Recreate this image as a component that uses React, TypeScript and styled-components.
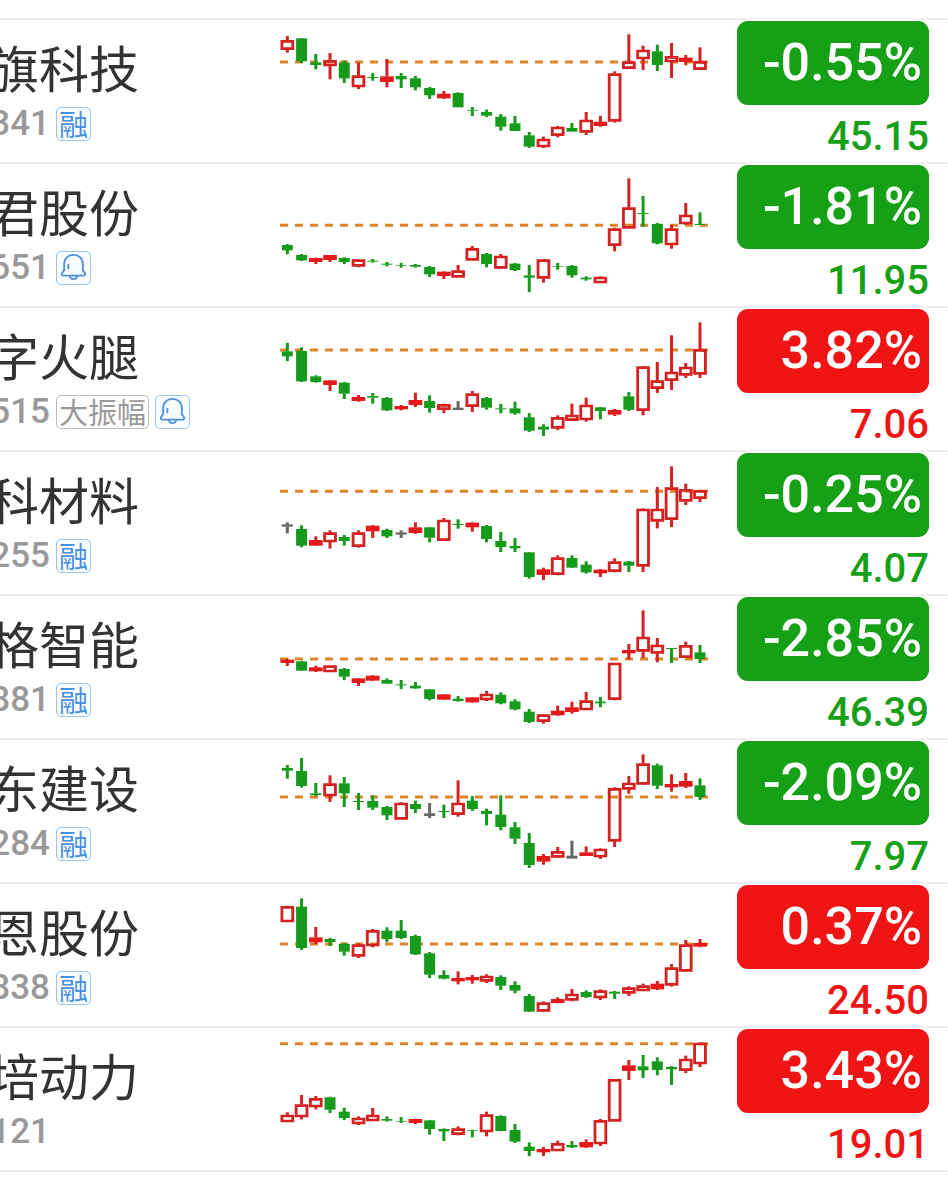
import React from 'react';
import styled, { createGlobalStyle } from 'styled-components';

const UP = '#f01414';
const DOWN = '#16a016';

const GlobalStyle = createGlobalStyle`
  *, *::before, *::after { box-sizing: border-box; }
  body {
    margin: 0;
    background: #fff;
    font-family: Roboto, "Noto Sans CJK SC", sans-serif;
  }
`;

const List = styled.ul`
  margin: 0;
  padding: 18px 0 10px;
  list-style: none;
`;

const Row = styled.li`
  display: grid;
  grid-template-columns: minmax(0, 1fr) 450px 192px;
  column-gap: 17px;
  height: 144px;
  padding-right: 19px;
  border-top: 2px solid #f0f0f0;

  &:last-child {
    height: 146px;
    border-bottom: 2px solid #f0f0f0;
  }
`;

const Stock = styled.div`
  display: flex;
  flex-direction: column;
`;

const Name = styled.div`
  display: flex;
  justify-content: flex-end;
  width: 139px;
  margin-top: 14px;
  color: #333;
  font-family: "Noto Sans CJK SC", sans-serif;
  font-size: 50px;
  line-height: 64px;
  white-space: nowrap;
`;

const Meta = styled.div`
  display: flex;
  align-items: center;
  gap: 6px;
  height: 34px;
  margin-top: 9px;
`;

const Code = styled.span`
  display: flex;
  flex: none;
  justify-content: flex-end;
  width: 50px;
  color: #999;
  font-size: 35px;
  font-weight: 500;
  line-height: 34px;
`;

const Tag = styled.span<{ $tone: 'blue' | 'gray' }>`
  display: flex;
  flex: none;
  align-items: center;
  justify-content: center;
  height: 34px;
  padding: 0 2px 3px;
  border: 1px solid ${(p) => (p.$tone === 'blue' ? '#9cc4ec' : '#bbb')};
  border-radius: 5px;
  background: ${(p) => (p.$tone === 'blue' ? '#f8fcff' : '#fff')};
  color: ${(p) => (p.$tone === 'blue' ? '#4a90dc' : '#999')};
  font-family: "Noto Sans CJK SC", sans-serif;
  font-size: 29px;
  line-height: 32px;
`;

const Chart = styled.svg`
  display: block;
  justify-self: end;
  width: 450px;
  height: 144px;
  margin-top: -2px;
`;

const Quote = styled.div`
  display: flex;
  flex-direction: column;
`;

const Change = styled.span<{ $color: string }>`
  height: 84px;
  margin-top: 1px;
  padding-right: 7px;
  border-radius: 11px;
  background: ${(p) => p.$color};
  color: #fff;
  font-size: 52px;
  font-weight: 500;
  line-height: 84px;
  text-align: right;
`;

const Price = styled.span<{ $color: string }>`
  margin-top: 8px;
  color: ${(p) => p.$color};
  font-size: 40px;
  font-weight: 500;
  line-height: 48px;
  text-align: right;
`;

type TagKind = 'margin' | 'swing' | 'alert';

interface StockData {
  name: string;
  code: string;
  tags: TagKind[];
  change: string;
  price: string;
  top: number;
  base: number;
  candles: string;
}

// Candles: kind (r up, g down, k flat), then high, body top, body bottom, low.
const stocks: StockData[] = [
  {
    name: '旗科技', code: '341', tags: ['margin'], change: '-0.55%', price: '45.15', top: 6, base: 126,
    candles: 'r 48 60 90 98,g 54 55 124 129,g 102 127 135 148,r 99 120 139 178,g 121 128 175 189,r 128 166 202 207,g 159 171 174 182,r 117 169 186 202,g 159 168 178 204,g 168 175 202 211,g 201 204 226 237,r 213 221 235 237,g 217 219 262 262,g 261 271 273 288,g 269 276 287 291,g 282 290 320 332,g 288 310 333 333,g 336 346 380 384,r 350 356 382 384,r 318 320 348 352,g 309 324 335 335,r 276 299 338 345,r 288 305 318 320,r 154 160 305 308,r 43 124 147 147,r 77 89 118 150,g 74 94 135 153,r 69 108 127 174,r 105 113 126 136,r 82 123 150 150',
  },
  {
    name: '君股份', code: '651', tags: ['alert'], change: '-1.81%', price: '11.95', top: 9, base: 181,
    candles: 'g 237 240 256 268,g 267 270 286 288,r 278 279 291 297,r 270 270 285 291,g 277 279 291 297,r 282 283 305 307,g 282 287 290 293,g 291 296 299 304,g 294 300 302 308,g 297 300 305 308,g 303 306 328 336,r 319 320 333 342,r 300 316 338 338,r 243 249 287 287,g 264 267 297 307,r 267 272 311 311,g 294 296 315 318,g 300 331 338 381,r 282 283 341 353,g 294 303 305 314,g 300 303 331 338,g 334 338 343 347,r 334 335 355 355,r 188 190 243 259,r 40 127 191 191,g 93 144 147 186,g 174 177 235 238,r 180 190 241 251,r 114 149 178 179,g 142 177 180 180',
  },
  {
    name: '字火腿', code: '515', tags: ['swing', 'alert'], change: '3.82%', price: '7.06', top: 12, base: 120,
    candles: 'g 99 124 139 153,g 112 123 214 216,g 196 199 216 218,r 210 211 225 243,g 216 218 251 267,r 255 261 273 275,g 249 258 263 281,g 261 264 301 303,r 285 288 298 301,r 248 270 285 291,g 256 273 294 308,r 281 282 300 309,k 273 293 300 300,r 243 250 291 306,g 261 264 293 299,g 282 295 298 310,g 275 295 310 314,g 309 322 362 366,g 343 350 359 378,r 316 321 356 360,r 281 314 333 333,r 263 284 331 335,g 291 292 303 328,r 297 300 314 318,g 246 259 299 303,r 168 169 303 316,r 156 211 237 249,r 76 185 213 240,r 159 170 197 204,r 37 117 194 204',
  },
  {
    name: '科材料', code: '255', tags: ['margin'], change: '-0.25%', price: '4.07', top: 15, base: 109,
    candles: 'k 202 208 215 235,g 211 222 272 277,r 244 255 272 273,r 226 232 262 281,g 240 246 258 272,r 226 232 276 278,r 211 212 229 249,g 221 225 244 249,k 226 232 239 249,r 202 217 234 237,g 216 217 248 262,r 189 194 258 258,g 193 207 210 221,r 202 203 217 230,g 210 213 252 262,g 231 258 276 291,g 249 273 280 291,g 291 292 366 371,r 338 343 360 375,r 301 307 360 361,g 301 309 338 339,g 319 329 352 356,r 342 344 355 366,r 310 319 351 352,g 318 320 332 351,r 160 161 335 351,r 96 161 200 220,r 34 97 195 216,r 86 102 140 150,r 104 105 132 141',
  },
  {
    name: '格智能', code: '881', tags: ['margin'], change: '-2.85%', price: '46.39', top: 18, base: 177,
    candles: 'r 176 179 189 198,g 183 184 212 213,r 197 202 214 216,r 196 196 217 217,g 204 207 230 240,r 234 235 249 258,r 226 227 242 243,g 235 240 251 252,g 240 253 256 267,g 246 257 265 266,g 267 268 297 301,r 282 283 299 300,g 288 296 303 305,r 291 292 307 308,r 273 281 301 303,g 277 284 310 313,g 298 304 328 331,g 327 335 366 369,r 342 343 366 371,r 317 332 346 347,r 305 322 336 341,r 276 301 331 331,g 291 305 310 322,r 188 188 300 301,r 132 150 160 178,r 31 110 155 174,r 114 134 161 187,g 144 144 147 189,r 125 135 174 174,g 135 157 177 189',
  },
  {
    name: '东建设', code: '284', tags: ['margin'], change: '-2.09%', price: '7.97', top: 21, base: 156,
    candles: 'g 60 69 77 101,g 39 78 123 128,g 114 145 150 153,r 91 115 154 171,g 96 115 145 186,g 144 168 171 195,g 151 168 188 195,g 183 186 211 225,r 172 173 224 224,g 167 177 192 204,k 174 205 213 219,g 179 198 201 219,r 106 173 210 215,g 153 167 192 198,g 191 198 207 241,g 151 209 246 256,g 231 247 281 297,g 264 294 360 369,r 327 333 350 359,r 306 318 338 339,k 287 332 341 341,r 304 322 333 333,r 310 311 337 342,r 127 129 290 306,r 93 113 134 146,r 28 55 119 120,g 56 61 122 132,r 88 117 127 140,r 84 108 125 129,g 100 121 156 165',
  },
  {
    name: '恩股份', code: '838', tags: ['margin'], change: '0.37%', price: '24.50', top: 15, base: 171,
    candles: 'r 56 57 106 106,g 34 59 183 189,r 120 151 166 171,g 153 156 165 177,g 167 171 194 206,r 169 172 209 213,r 126 129 178 181,g 121 131 156 165,g 99 131 153 156,g 143 147 202 204,g 195 199 263 273,g 250 264 275 277,r 253 273 283 292,r 264 270 280 290,r 262 266 284 288,g 265 270 296 309,g 283 294 311 319,g 321 327 374 375,r 343 346 374 375,r 331 336 348 349,r 306 320 341 343,g 310 315 330 333,r 307 310 334 339,g 312 314 320 336,r 298 301 320 327,r 290 295 313 313,r 282 290 307 309,r 231 241 296 299,r 159 172 254 254,r 156 168 179 181',
  },
  {
    name: '培动力', code: '121', tags: [], change: '3.43%', price: '19.01', top: 12, base: 41,
    candles: 'r 247 254 277 277,r 195 223 262 268,r 198 204 232 238,g 200 202 239 249,g 233 245 264 270,r 259 263 283 285,r 234 254 274 274,g 259 267 272 275,g 261 273 275 279,r 266 267 279 282,g 270 271 297 314,g 295 297 304 333,r 289 295 315 316,g 299 301 303 322,r 245 253 307 319,g 256 258 303 304,g 282 300 335 339,g 337 350 363 378,r 351 357 367 378,r 332 339 364 364,g 333 345 352 354,r 328 336 352 354,r 267 270 343 348,r 147 147 275 275,r 90 106 123 150,g 75 109 121 144,g 82 94 120 136,g 108 111 118 165,r 77 86 123 129,r 37 38 103 111',
  },
];

const candleColor: Record<string, string> = { r: '#d42222', g: '#169a1b', k: '#666' };

function CandleChart({ stock }: { stock: StockData }) {
  return (
    <Chart viewBox="0 0 1350 432" role="img" aria-label={`${stock.name} K线`}>
      <g transform={`translate(0 ${stock.top})`}>
        <path d={`M30 ${stock.base}H1314`} stroke="#dd8428" strokeWidth="9" strokeDasharray="24 21" />
        {stock.candles.split(',').map((entry, i) => {
          const [kind, ...values] = entry.split(' ');
          const [high, top, bottom, low] = values.map(Number);
          const x = 52 + i * 42.69;
          const half = kind === 'r' ? 20.5 : 16.5;
          const color = candleColor[kind];
          const hollow = kind === 'r' && bottom - top > 17;
          const hole = hollow ? `M${x - 12} ${top + 8}V${bottom - 8}H${x + 12}V${top + 8}Z` : '';
          return (
            <g key={i} fill={color}>
              {high < top && <rect x={x - 4.5} y={high} width="9" height={top - high + 1} />}
              {low > bottom && <rect x={x - 4.5} y={bottom - 1} width="9" height={low - bottom + 1} />}
              <path
                fillRule="evenodd"
                fill={kind === 'r' && !hollow ? '#e41a1a' : color}
                d={`M${x - half} ${top}H${x + half}V${bottom}H${x - half}Z${hole}`}
              />
            </g>
          );
        })}
      </g>
    </Chart>
  );
}

function BellIcon() {
  return (
    <svg width="29" height="28" viewBox="0 0 29 30" fill="none" stroke="#4a90dc" strokeWidth="2" strokeLinejoin="round" strokeLinecap="round" aria-hidden="true">
      <path d="M4.5 18.5V12C4.5 6 8.8 2 14.5 2S24.5 6 24.5 12V18.5L26.8 21.5C27.6 22.8 26.8 24.3 25.3 24.3H3.7C2.2 24.3 1.4 22.8 2.2 21.5Z" />
      <path d="M10.5 24.5C11 27 12.5 28 14.5 28S18 27 18.5 24.5" />
      <path d="M9 12.5V16.5" />
    </svg>
  );
}

function StockTag({ kind }: { kind: TagKind }) {
  if (kind === 'alert') {
    return <Tag $tone="blue"><BellIcon /></Tag>;
  }
  return kind === 'margin' ? <Tag $tone="blue">融</Tag> : <Tag $tone="gray">大振幅</Tag>;
}

export default function App() {
  return (
    <>
      <GlobalStyle />
      <List>
        {stocks.map((stock) => {
          const color = stock.change.startsWith('-') ? DOWN : UP;
          return (
            <Row key={stock.code}>
              <Stock>
                <Name>{stock.name}</Name>
                <Meta>
                  <Code>{stock.code}</Code>
                  {stock.tags.map((tag) => <StockTag key={tag} kind={tag} />)}
                </Meta>
              </Stock>
              <CandleChart stock={stock} />
              <Quote>
                <Change $color={color}>{stock.change}</Change>
                <Price $color={color}>{stock.price}</Price>
              </Quote>
            </Row>
          );
        })}
      </List>
    </>
  );
}
